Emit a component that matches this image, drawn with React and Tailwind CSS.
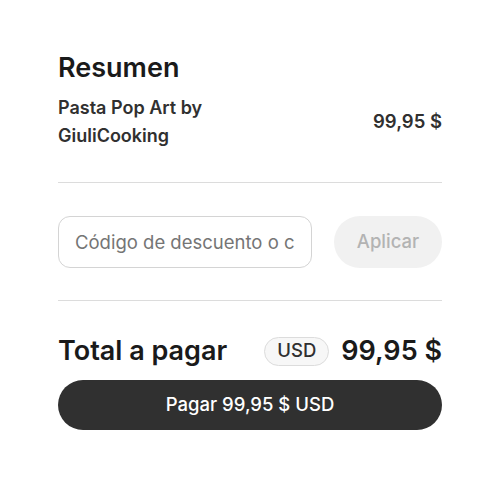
import React from 'react';

export default function App() {
  return (
    <div className="w-[500px] h-[500px] bg-white px-[58px] pt-[52px] text-[#303030]" style={{ fontFamily: 'Inter, "Noto Sans", sans-serif' }}>
      <h2 className="text-[27px] font-semibold leading-8 text-[#1a1a1a]">Resumen</h2>
      <div className="mt-[10px] flex items-center justify-between">
        <p className="w-[190px] text-[18px] font-semibold leading-7">Pasta Pop Art by GiuliCooking</p>
        <span className="text-[18.5px] font-semibold">99,95 $</span>
      </div>

      <div className="mt-[32px] h-px bg-[#dcdcdc]" />

      <div className="mt-[33px] flex items-center gap-[22px]">
        <input
          type="text"
          placeholder="Código de descuento o cupón"
          className="h-[52px] w-[254px] rounded-xl border border-[#d4d4d4] px-4 text-[18.5px] text-[#303030] placeholder:text-[#757575] focus:outline-none"
        />
        <button disabled className="h-[52px] flex-1 rounded-full bg-[#f1f1f1] text-[18.5px] font-medium text-[#b3b3b3]">
          Aplicar
        </button>
      </div>

      <div className="mt-[32px] h-px bg-[#dcdcdc]" />

      <div className="mt-[34px] flex items-center justify-between">
        <span className="text-[27px] font-semibold leading-8 text-[#1a1a1a]">Total a pagar</span>
        <div className="flex items-center gap-3">
          <span className="flex h-[29px] items-center rounded-full border border-[#dcdcdc] bg-[#f7f7f7] px-3 text-[18.5px] font-medium text-[#303030]">USD</span>
          <span className="text-[27px] font-semibold leading-8 text-[#1a1a1a]">99,95 $</span>
        </div>
      </div>

      <button className="mt-[13px] h-[50px] w-full rounded-full bg-[#303030] text-[18.5px] font-medium text-white">
        Pagar 99,95 $ USD
      </button>
    </div>
  );
}
